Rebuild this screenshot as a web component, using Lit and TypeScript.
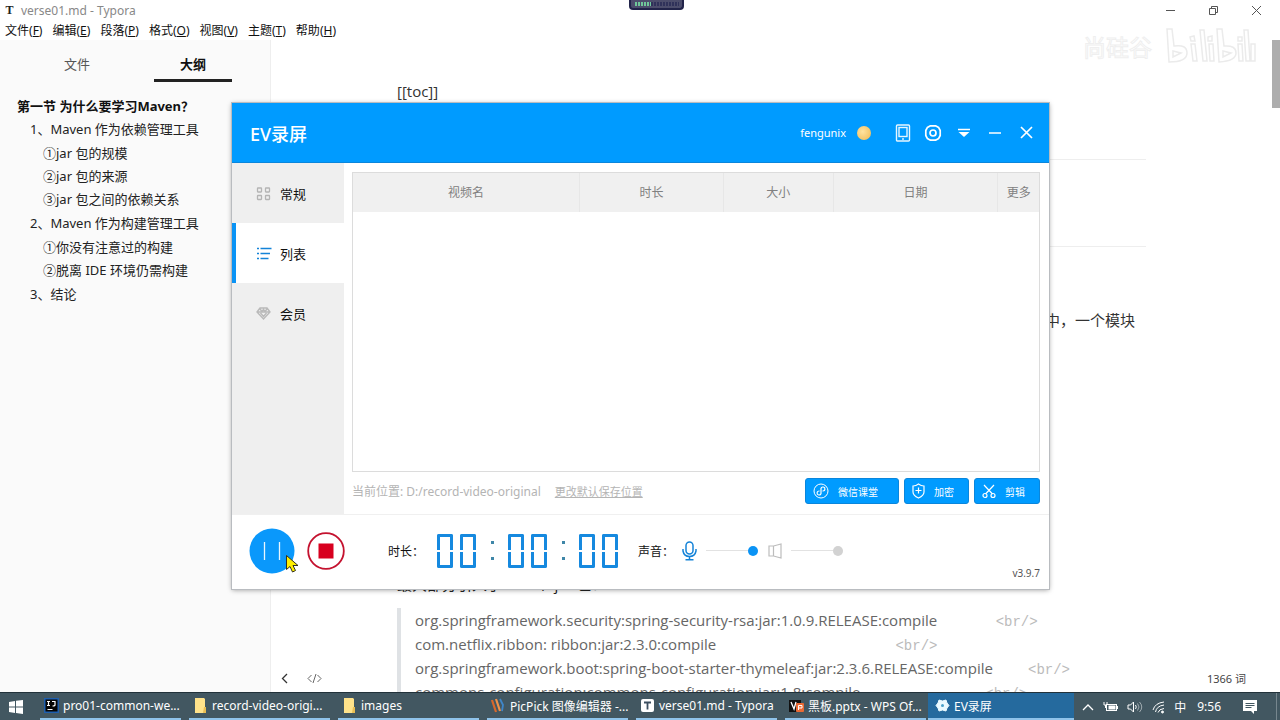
import { LitElement, html, css, svg, nothing } from "lit";
import { customElement } from "lit/decorators.js";
import { classMap } from "lit/directives/class-map.js";

const uiFont = css`"Noto Sans", "Noto Sans CJK SC", sans-serif`;

@customElement("typora-window")
class TyporaWindow extends LitElement {
  static styles = css`
    :host { display: flex; flex-direction: column; flex: 1; min-height: 0; background: #fff; font-family: ${uiFont}; color: #222; }
    * { box-sizing: border-box; }
    ul { list-style: none; margin: 0; padding: 0; }
    .titlebar { display: flex; align-items: center; height: 22px; flex: none; padding: 0 18px 2px 4px; font-size: 12px; color: #888; }
    .logo { width: 11px; text-align: center; font: bold 12px "Liberation Serif", serif; color: #222; margin-right: 6px; }
    .title { flex: 1; }
    .winbtns { display: flex; gap: 32px; }
    .winbtns button { border: 0; padding: 0; background: none; width: 11px; height: 20px; display: grid; place-items: center; }
    .menu { display: flex; gap: 10px; height: 18px; flex: none; padding-left: 5px; font-size: 12px; line-height: 18px; color: #111; }
    .menu button { border: 0; background: none; padding: 0; font: inherit; line-height: 18px; color: inherit; }
    .body { flex: 1; min-height: 0; display: flex; position: relative; }
    .side { width: 271px; flex: none; background: #fafafa; border-right: 1px solid #eee; font-size: 13px; }
    .tabs { display: flex; justify-content: space-evenly; }
    .tab { width: 78px; height: 42px; border: 0; border-bottom: 3px solid transparent; background: none; padding: 8px 0 0; font: inherit; color: #555; }
    .tab.on { border-color: #222; color: #111; font-weight: 700; }
    .outline { padding: 13px 0 0 17px; line-height: 23px; white-space: nowrap; }
    .outline a { color: #222; text-decoration: none; }
    .outline .top > a { font-weight: 700; color: #111; }
    .outline ul { padding-left: 13px; }
    .outline ul ul { margin: 1px 0; }
    .doc { flex: 1; min-width: 0; overflow: hidden; display: flex; justify-content: center; }
    article { width: 749px; flex: none; padding-top: 39px; font: 15px/24px "Open Sans", "Noto Sans CJK SC", sans-serif; color: #333; }
    p { margin: 0; }
    hr { border: 0; border-top: 1px solid #eee; margin: 0; }
    .h1 { margin-top: 56px; }
    .h2 { margin-top: 86px; }
    .para { margin-top: 61px; padding-right: 11px; text-align: right; }
    .lead { margin-top: 240px; color: #222; }
    blockquote { margin: 12px 0 0; border-left: 4px solid #dfe2e5; padding-left: 14px; color: #666; white-space: pre; }
    .dep { height: 24px; }
    .tag { font-family: "Liberation Mono", monospace; font-size: 14px; color: #bbb; }
    .scroll { width: 8px; flex: none; }
    .thumb { height: 68px; background: #adadad; }
    .status { position: absolute; left: 271px; right: 8px; bottom: 0; height: 28px; padding: 0 26px 0 10px; display: flex; align-items: center; gap: 18px; font-size: 11px; color: #444; }
    .status button { border: 0; background: none; padding: 0; display: grid; }
    .words { margin-left: auto; }
    .mark { position: absolute; right: 24px; top: -14px; display: flex; align-items: center; gap: 12px; font-size: 23px; color: transparent; -webkit-text-stroke: 1px #efefef; }
  `;

  menus = [["文件", "F"], ["编辑", "E"], ["段落", "P"], ["格式", "O"], ["视图", "V"], ["主题", "T"], ["帮助", "H"]];
  outline = [
    { t: "1、Maven 作为依赖管理工具", c: ["①jar 包的规模", "②jar 包的来源", "③jar 包之间的依赖关系"] },
    { t: "2、Maven 作为构建管理工具", c: ["①你没有注意过的构建", "②脱离 IDE 环境仍需构建"] },
    { t: "3、结论", c: [] as string[] },
  ];
  deps: [string, number][] = [
    ["org.springframework.security:spring-security-rsa:jar:1.0.9.RELEASE:compile", 15],
    ["com.netflix.ribbon: ribbon:jar:2.3.0:compile", 46],
    ["org.springframework.boot:spring-boot-starter-thymeleaf:jar:2.3.6.RELEASE:compile", 9],
    ["commons-configuration:commons-configuration:jar:1.8:compile", 32],
  ];

  render() {
    return html`
      <div class="titlebar">
        <span class="logo">T</span><span class="title">verse01.md - Typora</span>
        <div class="winbtns">
          <button aria-label="最小化"><svg width="11" height="11" fill="none" stroke="#555"><path d="M1 5.500h9" /></svg></button>
          <button aria-label="还原"><svg width="11" height="11" fill="none" stroke="#555"><path d="M1.500 3.500h6v6h-6zM3.500 3.500v-2h6v6h-2" /></svg></button>
          <button aria-label="关闭"><svg width="11" height="11" fill="none" stroke="#555"><path d="M1 1l9 9M10 1l-9 9" /></svg></button>
        </div>
      </div>
      <nav class="menu">${this.menus.map(([n, k]) => html`<button>${n}(<u>${k}</u>)</button>`)}</nav>
      <div class="body">
        <aside class="side">
          <div class="tabs"><button class="tab">文件</button><button class="tab on">大纲</button></div>
          <ul class="outline">
            <li class="top"><a href="#">第一节 为什么要学习Maven？</a>
              <ul>${this.outline.map((s) => html`<li><a href="#">${s.t}</a>${s.c.length
                ? html`<ul>${s.c.map((c) => html`<li><a href="#">${c}</a></li>`)}</ul>` : nothing}</li>`)}</ul>
            </li>
          </ul>
        </aside>
        <div class="doc">
          <article>
            <p>[[toc]]</p>
            <hr class="h1" /><hr class="h2" />
            <p class="para">中，一个模块</p>
            <p class="lead">最大部分引入了 100 个 jar 包：</p>
            <blockquote>${this.deps.map(([d, n]) => html`<div class="dep">${d}${" ".repeat(n)}<span class="tag">&lt;br/&gt;</span></div>`)}</blockquote>
          </article>
        </div>
        <div class="scroll"><div class="thumb"></div></div>
        <div class="mark" aria-hidden="true">
          <span>尚硅谷</span>
          <svg width="92" height="40" fill="none" stroke="#ebebeb" stroke-width="1.500">
            <path d="M3 3l5 0 2 17q13-2 13 7t-18 9zM9 25v6l8-4zM27 18h4l2 17h-4zM26 11l4-1 1 5-4 0zM36 4h4l3 31h-4zM45 18h4l1 17h-4zM44 11l4-1 0 5-4 0zM53 3h5l2 17q12-1 12 7t-17 9zM59 25v6l8-4zM74 18h4l1 17h-4zM74 11h4v4h-4zM80 4h4l2 31h-4zM87 18h4v17h-4z" />
          </svg>
        </div>
        <div class="status">
          <button aria-label="收起"><svg width="8" height="11" fill="none" stroke="#333" stroke-width="1.300"><path d="M6 1L1.500 5.500 6 10" /></svg></button>
          <button aria-label="源代码"><svg width="15" height="11" fill="none" stroke="#666"><path d="M4.500 2L1 5.500 4.500 9M10.500 2L14 5.500 10.500 9M9 1L6 10" /></svg></button>
          <span class="words">1366 词</span>
        </div>
      </div>`;
  }
}

@customElement("segment-clock")
class SegmentClock extends LitElement {
  static styles = css`
    :host { display: block; }
    .clock { display: flex; gap: 7px; height: 34px; }
    .zero { width: 16px; display: flex; flex-direction: column; gap: 2px; }
    .half { flex: 1; box-sizing: border-box; border: 3px solid #1689df; background: #fff; }
    .half.up { border-bottom: 0; border-radius: 2px 2px 0 0; }
    .half.down { border-top: 0; border-radius: 0 0 2px 2px; }
    .colon { width: 18px; display: flex; flex-direction: column; align-items: center; justify-content: center; gap: 13px; }
    .dot { width: 3px; height: 3px; background: #3f86a8; }
  `;
  render() {
    return html`<div class="clock" role="timer" aria-label="00:00:00">${[..."00:00:00"].map((c) => c === ":"
      ? html`<div class="colon"><i class="dot"></i><i class="dot"></i></div>`
      : html`<div class="zero"><i class="half up"></i><i class="half down"></i></div>`)}</div>`;
  }
}

@customElement("recorder-window")
class RecorderWindow extends LitElement {
  static styles = css`
    :host { display: flex; flex-direction: column; background: #fff; font-family: ${uiFont}; color: #111; box-shadow: 0 0 0 1px #b9bcc0, 0 1px 5px rgba(0, 0, 0, 0.4); }
    * { box-sizing: border-box; }
    button { border: 0; background: none; padding: 0; font: inherit; color: inherit; }
    header { height: 60px; flex: none; background: #009bff; border-bottom: 1px solid #0a86dc; color: #fff; display: flex; align-items: center; padding: 0 13px 0 18px; }
    h1 { margin: 0; flex: 1; font-size: 18px; font-weight: 500; }
    .user { font-size: 11px; margin-right: 11px; }
    .coin { width: 14px; height: 14px; border-radius: 50%; background: radial-gradient(circle at 40% 40%, #ffe3a0, #f0b850); margin-right: 23px; }
    .tools { display: flex; gap: 12px; }
    .tools button { width: 18px; height: 20px; display: grid; place-items: center; }
    .tools .wide { width: 20px; }
    .mid { flex: 1; min-height: 0; display: flex; border-bottom: 1px solid #f0f0f0; }
    nav { width: 112px; flex: none; background: #efefef; }
    .item { width: 100%; height: 60px; display: flex; align-items: center; gap: 8px; padding: 0 0 0 24px; font-size: 13px; }
    .item.on { background: #fff; border-left: 4px solid #0a93f5; padding-left: 20px; }
    .main { flex: 1; min-width: 0; display: flex; flex-direction: column; padding: 9px 9px 10px 8px; }
    .list { flex: 1; border: 1px solid #dcdcdc; }
    table { width: 100%; border-collapse: collapse; table-layout: fixed; }
    th { height: 39px; padding: 0 0 2px; background: #f0f0f0; border-right: 1px solid #e7e7e7; font-weight: 400; font-size: 12px; color: #808080; }
    th:last-child { border: 0; }
    .c1 { width: 33%; } .c2 { width: 21%; } .c3 { width: 16%; } .c4 { width: 24%; } .c5 { width: 6%; }
    .info { display: flex; align-items: center; height: 26px; margin-top: 6px; font-size: 12px; color: #b4b4b4; }
    .info a { color: #b4b4b4; margin-left: 14px; font-size: 11px; flex: 1; }
    .acts { display: flex; gap: 5px; }
    .acts button { height: 26px; display: flex; align-items: center; gap: 9px; padding: 0 14px 0 7px; border: 1px solid #0a86dc; border-radius: 3px; background: #009bff; color: #fff; font-size: 10px; }
    .acts .long { padding-right: 20px; }
    footer { height: 74px; flex: none; display: flex; align-items: center; padding: 0 9px 3px 17px; font-size: 12px; }
    .stop { margin: 0 43px 0 12px; }
    .round { display: grid; }
    .lbl { width: 49px; }
    segment-clock { margin-right: 20px; }
    .vol { width: 44px; }
    input { appearance: none; margin: 0 10px 0 9px; width: 52px; height: 12px; background: linear-gradient(#e2e2e2, #e2e2e2) center / 100% 1px no-repeat; }
    input::-webkit-slider-thumb { appearance: none; width: 10px; height: 10px; border-radius: 50%; background: #0a93f5; }
    input.off::-webkit-slider-thumb { background: #d2d2d2; }
    .ver { margin-left: auto; align-self: flex-end; margin-bottom: 6px; font-size: 10px; color: #555; }
  `;

  render() {
    return html`
      <header>
        <h1>EV录屏</h1><span class="user">fengunix</span><span class="coin"></span>
        <div class="tools">
          <button aria-label="手机"><svg width="16" height="18" fill="none" stroke="#e6f6ff" stroke-width="1.400"><rect x="1.500" y="1" width="13" height="16" rx="1" /><rect x="4" y="3.500" width="8" height="9" /><path d="M8 14v2" /></svg></button>
          <button aria-label="设置"><svg width="18" height="18" fill="none" stroke="#fff" stroke-width="1.700"><path d="M6.500 1.800h5l3.200 1.800 1.500 2.900v5l-1.500 2.900-3.200 1.800h-5l-3.200-1.800-1.500-2.900v-5l1.500-2.900z" stroke-linejoin="round" /><circle cx="9" cy="9" r="3" /></svg></button>
          <button class="wide" aria-label="菜单"><svg width="14" height="12"><path d="M1 2.500h12" stroke="#fff" stroke-width="1.500" /><path d="M1.500 5h11L7 10z" fill="#fff" /></svg></button>
          <button aria-label="最小化"><svg width="14" height="12"><path d="M1 6h12" stroke="#fff" stroke-width="1.500" /></svg></button>
          <button class="wide" aria-label="关闭"><svg width="13" height="13"><path d="M1 1l11 11M12 1L1 12" stroke="#fff" stroke-width="1.700" /></svg></button>
        </div>
      </header>
      <div class="mid">
        <nav>
          ${[
            ["常规", svg`<g stroke="#b4b4b4" stroke-width="1.300"><rect x="1.500" y="2" width="4" height="4" rx=".5"/><rect x="9.500" y="2" width="4" height="4" rx=".5"/><rect x="1.500" y="9.500" width="4" height="4" rx=".5"/><rect x="9.500" y="9.500" width="4" height="4" rx=".5"/></g>`],
            ["列表", svg`<path d="M1 2.500h2M4.500 2.500H15.500M1 7.500h2M4.500 7.500h9.500M1 12.500h2M4.500 12.500h8" stroke="#1483d8" stroke-width="1.500"/>`],
            ["会员", svg`<path d="M4 2h7l3 4-6.500 7L1 6zM1.500 6h12M4.500 7l3 3.500 3-3.500M4 3l2 2.500 1.500-2 1.500 2 2-2.500" stroke="#b9b9b9" stroke-width="1.400"/>`],
          ].map(([name, icon]) => html`<button class=${classMap({ item: true, on: name === "列表" })}>
            <svg width="16" height="15" fill="none">${icon}</svg>${name}</button>`)}
        </nav>
        <div class="main">
          <div class="list"><table><thead><tr>
            <th class="c1">视频名</th><th class="c2">时长</th><th class="c3">大小</th><th class="c4">日期</th><th class="c5">更多</th>
          </tr></thead></table></div>
          <div class="info">
            <span>当前位置: D:/record-video-original</span><a href="#">更改默认保存位置</a>
            <div class="acts">
              <button class="long"><svg width="16" height="16" fill="none" stroke="#fff"><circle cx="8" cy="8" r="7" /><path d="M8 10.500V5.500a2 2 0 1 1 2 2.500H9.500M8 5.500v5a2 2 0 1 1-2-2.500h.5" stroke-width="1.200" /></svg>微信课堂</button>
              <button><svg width="13" height="16" fill="none" stroke="#fff" stroke-width="1.200"><path d="M6.500 1Q9 3 12 3v6q0 3.500-5.500 6Q1 12.500 1 9V3q3 0 5.500-2zM3.500 7.500h6M6.500 4.500v6" /></svg>加密</button>
              <button><svg width="14" height="16" fill="none" stroke="#fff" stroke-width="1.200"><path d="M2 2l8.500 9M12 2l-8.500 9" /><circle cx="3" cy="12.500" r="2" /><circle cx="11" cy="12.500" r="2" /></svg>剪辑</button>
            </div>
          </div>
        </div>
      </div>
      <footer>
        <button class="round" aria-label="暂停"><svg width="46" height="46"><circle cx="23" cy="23" r="22.500" fill="#0a98fb" /><path d="M15.500 14v18M30.500 14v18" stroke="#e9f6ff" stroke-width="1.300" /></svg></button>
        <button class="round stop" aria-label="停止"><svg width="38" height="38"><circle cx="19" cy="19" r="17.800" fill="#fff" stroke="#c4122f" stroke-width="1.800" /><rect x="11.500" y="11.500" width="15" height="15" fill="#d8001f" /></svg></button>
        <span class="lbl">时长：</span>
        <segment-clock></segment-clock>
        <label class="vol" for="mic">声音：</label>
        <svg width="15" height="20" fill="none" stroke="#1483d8" stroke-width="1.500"><rect x="4" y="1" width="7" height="12" rx="3.500" /><path d="M1 8v2q1 5.500 6.500 5.500T14 10V8M7.500 15.500v3M3.500 18.700h8" /></svg>
        <input id="mic" type="range" value="100" aria-label="麦克风音量" />
        <svg width="14" height="16" fill="none" stroke="#bdbdbd" stroke-width="1.200"><path d="M1 3h4.500v10H1zM5.500 3L13 1v14l-7.500-2" /></svg>
        <input class="off" type="range" value="100" aria-label="扬声器音量" />
        <span class="ver">v3.9.7</span>
      </footer>`;
  }
}

@customElement("task-bar")
class TaskBar extends LitElement {
  static styles = css`
    :host { display: flex; flex: none; height: 28px; box-sizing: border-box; border-top: 1px solid #22323a; background: #425761; color: #fff; font: 12px ${uiFont}; padding-right: 3px; }
    * { box-sizing: border-box; }
    button { border: 0; background: none; padding: 0; font: inherit; color: inherit; }
    .start { width: 40px; padding-left: 8px; display: flex; align-items: center; flex: none; }
    .apps { display: flex; gap: 8px; min-width: 0; }
    .app { width: 141px; display: flex; align-items: center; gap: 4px; padding: 0 0 0 4px; border-bottom: 2px solid #8fc3ea; white-space: nowrap; }
    .app svg { flex: none; }
    .app.on { background: #256a9e; width: 146px; margin-left: -6px; padding-left: 7px; }
    .tray { margin-left: auto; display: flex; align-items: center; gap: 9px; padding-right: 18px; border-right: 1px solid #76868e; }
    .tray .time { margin: 0 12px 0 2px; }
  `;

  folder = svg`<path d="M2 0h9l1 1v8h1v6H2z" fill="#ffe28a"/><path d="M11 9h2v6h-3z" fill="#e9bd52"/>`;
  apps: [string, unknown][] = [
    ["pro01-common-we...", svg`<rect width="15" height="15" fill="#1f5fae"/><rect x="1.500" y="1.500" width="12" height="12" fill="#050505"/><path d="M3 3.500h3M4.500 3.500v4M3 7.500h3M8 3.500h3v3.500q0 1-2.500 1M3.500 11.500h5" stroke="#fff" stroke-width="1.200" fill="none"/>`],
    ["record-video-origi...", this.folder],
    ["images", this.folder],
    ["PicPick 图像编辑器 -...", svg`<path d="M1 2l4 12" stroke="#d8682c" stroke-width="2.200"/><path d="M5 1l4 12" stroke="#f0914a" stroke-width="2.200"/><path d="M9 1l3 6-1 6" stroke="#3f86c8" stroke-width="1.800" fill="none"/>`],
    ["verse01.md - Typora", svg`<rect x="1" y="1" width="13" height="13" rx="2" fill="#fff"/><path d="M4 4.500h7M7.500 4.500v7" stroke="#3c4f60" stroke-width="1.800"/>`],
    ["黑板.pptx - WPS Of...", svg`<rect y="2" width="12" height="12" fill="#111"/><path d="M2 4l3 7 2-7" stroke="#fff" stroke-width="1.300" fill="none"/><rect x="7" y="5" width="8" height="9" rx="1" fill="#ea6a35"/><path d="M9.500 12V7.500h3.500v2.500h-3" stroke="#fff" fill="none"/>`],
    ["EV录屏", svg`<path d="M4 2l3.500 1L11 2l1 3 2 2.500-2 2.500-1 3-3.500-1L4 13l-1-3-2-2.500L3 5z" fill="#eafaff" stroke="#eafaff"/><circle cx="7.500" cy="7.500" r="1.500" fill="#4aa0c8"/>`],
  ];

  render() {
    return html`
      <button class="start" aria-label="开始"><svg width="16" height="16" fill="#fff"><path d="M1 3l6-1v5.500H1zM8 1.800L15 1v6.500H8zM1 8.500h6V14l-6-1zM8 8.500h7V15l-7-1z" /></svg></button>
      <div class="apps">${this.apps.map(([name, icon]) => html`<button class=${classMap({ app: true, on: name === "EV录屏" })}>
        <svg width="15" height="15" viewBox="0 0 15 15">${icon}</svg><span>${name}</span></button>`)}</div>
      <div class="tray">
        <svg width="12" height="8" fill="none" stroke="#fff" stroke-width="1.300"><path d="M1 7l5-5 5 5" /></svg>
        <svg width="15" height="12" fill="none" stroke="#fff"><rect x="3.500" y="3.500" width="10" height="6" /><rect x="6" y="5" width="6" height="3" fill="#fff" /><path d="M1 1v3h3V1M2.500 4v3M14.500 5v3" /></svg>
        <svg width="16" height="14" fill="none" stroke="#fff"><path d="M1 5h2.500L6.500 2v10L3.500 9H1zM8.500 5q1.500 2 0 4" /><path d="M10.500 3.500q3 3.500 0 7M12.500 2q4.500 5 0 10" opacity=".5" /></svg>
        <svg width="13" height="14" fill="none" stroke="#fff"><path d="M1 10Q3 3 12 2M3.500 12Q4.500 6 12 5M6 12.500Q7 9 12 8.500" /><circle cx="10.500" cy="12" r="1" fill="#fff" /></svg>
        <span>中</span>
        <time class="time">9:56</time>
        <svg width="16" height="16"><path d="M1 1h14v11h-3v3l-3-3H1z" fill="#fff" /><path d="M3.500 4.500h9M3.500 6.500h9M3.500 8.500h6" stroke="#425761" /></svg>
      </div>`;
  }
}

@customElement("app-root")
class AppRoot extends LitElement {
  static styles = css`
    :host { display: flex; flex-direction: column; height: 100vh; overflow: hidden; position: relative; background: #fff; }
    .recorder { position: absolute; left: 232px; top: 103px; width: 817px; height: 486px; }
    .meter { position: absolute; left: 629px; top: 0; width: 55px; height: 10px; box-sizing: border-box; border: 2px solid #22244a; border-top: 0; border-radius: 0 0 4px 4px; background: #4c4d6c; }
    .meter svg { display: block; }
    .cursor { position: absolute; left: 285px; top: 554px; }
  `;
  render() {
    return html`
      <typora-window></typora-window>
      <task-bar></task-bar>
      <recorder-window class="recorder"></recorder-window>
      <div class="meter"><svg width="51" height="8" fill="none" stroke-width="4"><path d="M4 4h16" stroke="#6fc79a" stroke-dasharray="2 1" /><path d="M20 4h28" stroke="#30325a" stroke-dasharray="2 1" /></svg></div>
      <svg class="cursor" width="14" height="20"><path d="M1.500 1.500v14l3.500-3 2.500 5.500 3-1.500L8 11.500h5z" fill="#ffee00" stroke="#33301a" /></svg>`;
  }
}
